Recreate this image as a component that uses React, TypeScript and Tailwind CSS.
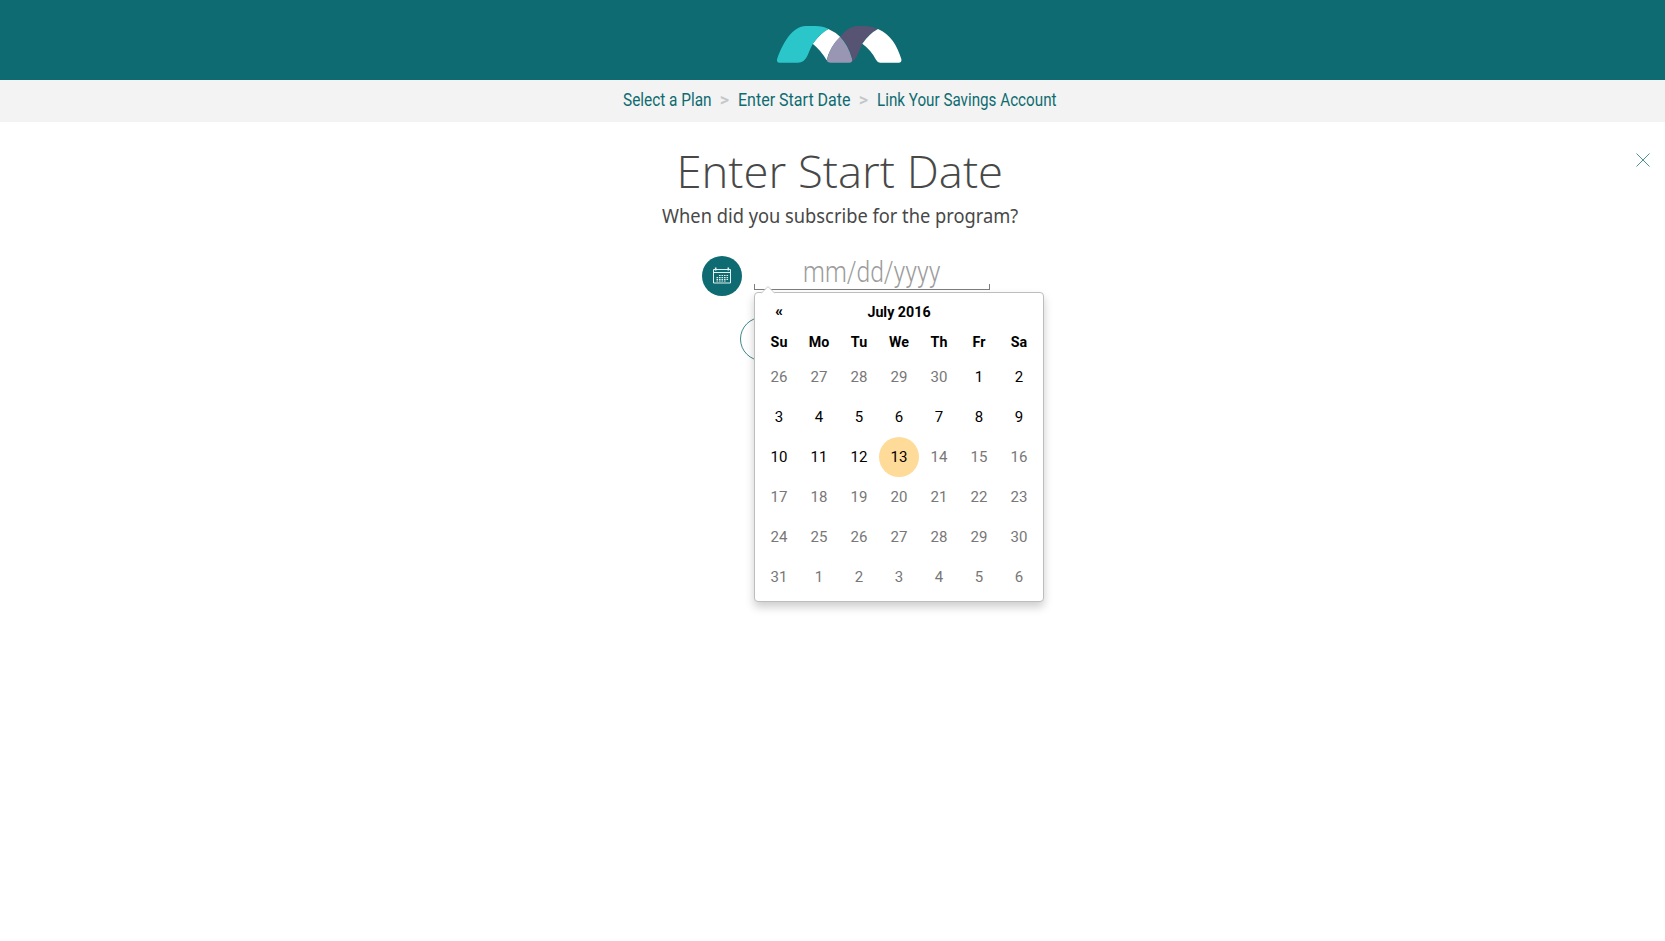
import React from 'react';

const days = ['Su', 'Mo', 'Tu', 'We', 'Th', 'Fr', 'Sa'];
const cells = [
  26, 27, 28, 29, 30, 1, 2,
  3, 4, 5, 6, 7, 8, 9,
  10, 11, 12, 13, 14, 15, 16,
  17, 18, 19, 20, 21, 22, 23,
  24, 25, 26, 27, 28, 29, 30,
  31, 1, 2, 3, 4, 5, 6,
];
const FIRST_ENABLED = 5;
const TODAY = 17;

function Logo() {
  return (
    <svg width="160" height="75" viewBox="0 0 480 225" className="mt-[10px] block">
      <path d="M158 101Q184 67 205 57Q226 66 241 81Q210 109 200 151Q184 122 158 101Z" fill="#fff" />
      <path d="M57 158Q48 157 52 145C68 100 97 48 138 48H166Q190 48 206 57C184 68 167 88 155 108C143 133 139 158 114 158Z" fill="#2bc6ca" />
      <path d="M241 80C258 59 273 48 294 48H319Q339 49 354 57C333 67 315 86 304 108C292 135 288 151 274 155Q279 148 274 136Q263 101 241 80Z" fill="#565373" />
      <path d="M240 80Q265 105 276 146Q279 158 267 158H211Q197 158 202 144Q211 109 240 80Z" fill="#9896b2" />
      <path d="M307 101Q329 70 354 57C391 73 411 105 424 147Q426 158 416 158H360Q353 158 348 149Q334 121 307 101Z" fill="#fff" />
    </svg>
  );
}

function CalendarIcon() {
  return (
    <svg width="18" height="17" viewBox="0 0 18 17" fill="none" stroke="#e6f0f0" className="mb-[2px]">
      <path d="M.5 2.5h17v13.5h-17zM.5 5.5h17" />
      <path d="M2.7 .5v3M15.3 .5v3" strokeWidth="1.6" />
      <path d="M6 8.5h10M3.5 10.5h12M3.5 12.3h12M3.5 14h10" strokeDasharray="1.6 .9" strokeWidth="1.2" />
    </svg>
  );
}

function Chevron() {
  return <span className="w-[27px] text-center text-[18px] font-medium text-[#c3c7c9]">&gt;</span>;
}

export default function App() {
  return (
    <div className="h-[941px] w-full overflow-hidden bg-white font-[Roboto,sans-serif]">
      <div className="w-[1680px]">
        <header className="flex h-[80px] justify-center bg-[#0e6b71]">
          <Logo />
        </header>
        <nav className="flex h-[42px] items-center justify-center bg-[#f3f3f3] text-[18px] text-[#0e6b71]">
          <div className="flex h-full w-[434px] items-center whitespace-nowrap pb-[4px]">
            <a className="w-[88px]"><span className="inline-block origin-left scale-x-[0.855]">Select a Plan</span></a>
            <Chevron />
            <a className="w-[112px]"><span className="inline-block origin-left scale-x-[0.89]">Enter Start Date</span></a>
            <Chevron />
            <a className="w-[180px]"><span className="inline-block origin-left scale-x-[0.845]">Link Your Savings Account</span></a>
          </div>
        </nav>
      </div>
      <div className="flex h-0 justify-end pr-[15px] pt-[31px]">
        <svg width="14" height="14" viewBox="0 0 14 14" stroke="#4c9297" strokeWidth="1" className="shrink-0">
          <path d="M.5 .5l13 13M13.5 .5l-13 13" />
        </svg>
      </div>
      <main className="-mt-[31px] flex w-[1680px] flex-col items-center text-[#484848]">
        <h1 className="mt-[21px] h-[57px] scale-x-[1.01] whitespace-nowrap font-['Open_Sans'] text-[45px] font-light leading-[56px]">Enter Start Date</h1>
        <p className="mt-[2px] h-[28px] scale-x-[0.962] whitespace-nowrap font-['Noto_Sans'] text-[19px] leading-[28px]">When did you subscribe for the program?</p>
        <div className="mt-[18px] flex h-[48px] w-[276px] items-start gap-3">
          <div className="mt-[8px] flex size-10 shrink-0 items-center justify-center rounded-full bg-[#0e6b71]">
            <CalendarIcon />
          </div>
          <div className="relative h-[42px] w-[236px] shrink-0">
            <div className="flex h-[42px] items-center justify-center pt-[5px] text-[30px] font-light text-[#9c9c9c]">
              <span className="inline-block scale-x-[0.82]">mm/dd/yyyy</span>
            </div>
            <div className="absolute bottom-0 left-0 h-[6px] w-full border-x border-b border-[#7d7d7d]" />
            <div className="absolute left-0 top-[44px] z-10 h-[310px] w-[290px] rounded-[4px] border border-[#bdbdbd] bg-white p-1 text-black shadow-[0_5px_10px_rgba(0,0,0,0.2)]">
              <svg width="14" height="8" viewBox="0 0 14 8" className="absolute -top-[7px] left-[6px]">
                <path d="M0 7.5L7 .5L14 7.5" fill="#fff" stroke="#c8c8c8" />
                <path d="M1 7.5h12" stroke="#fff" />
              </svg>
              <div className="grid h-[30px] grid-cols-7 items-center text-center text-[15px] font-bold">
                <span className="pb-[2px] font-black">«</span>
                <span className="col-span-5 scale-x-[0.95]">July 2016</span>
              </div>
              <div className="grid h-[30px] grid-cols-7 items-center text-center text-[15px] font-bold">
                {days.map((d) => <span key={d} className="scale-x-[0.95]">{d}</span>)}
              </div>
              <div className="grid grid-cols-7 text-center text-[15px] leading-[40px]">
                {cells.map((n, i) => (
                  <span
                    key={i}
                    className={i === TODAY ? 'rounded-full bg-[#ffdb99]' : i < FIRST_ENABLED || i > TODAY ? 'text-[#777777]' : ''}
                  >
                    {n}
                  </span>
                ))}
              </div>
            </div>
          </div>
        </div>
        <div className="mt-[21px] h-[44px] w-[200px] rounded-full border border-[#3f878c]" />
      </main>
    </div>
  );
}
